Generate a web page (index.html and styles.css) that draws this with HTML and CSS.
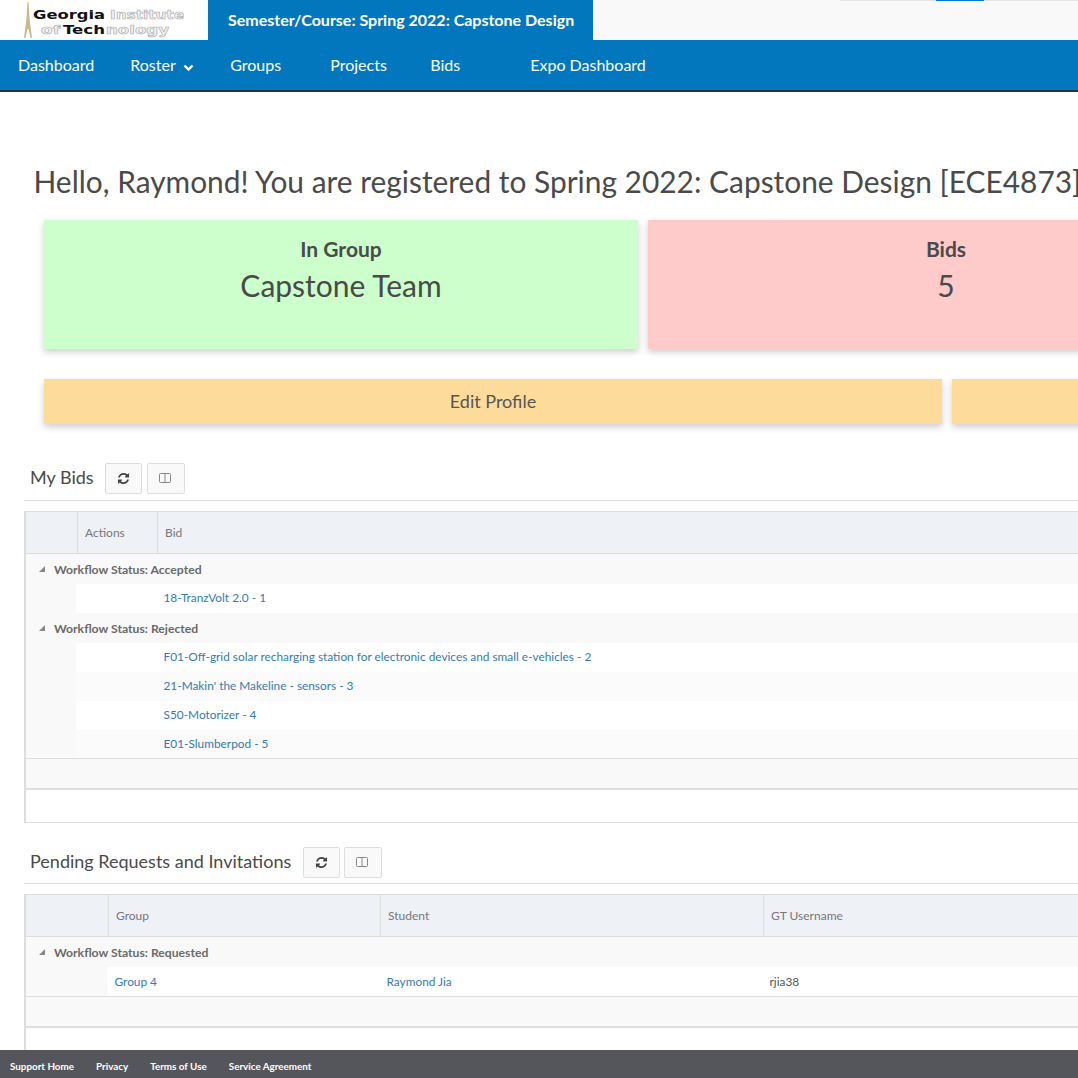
FILE: index.html
```html
<!DOCTYPE html>
<html lang="en">
<head>
	<meta charset="UTF-8">
	<title>Dashboard</title>
	<link rel="stylesheet" href="styles.css">
</head>
<body>
	<div class="top">
		<div class="logo">
			<svg width="208" height="40" viewBox="0 0 208 40">
				<path d="M27.500 2 L28.500 2 L29.500 18 L32 38 L30.500 38 L28.500 29 L27.500 29 L25.500 38 L24 38 L26.500 18 Z" fill="#c9b98a"/>
				<text class="logo-bold" x="33" y="19" textLength="72" lengthAdjust="spacingAndGlyphs">Georgia</text>
				<text class="logo-thin" x="110" y="19" textLength="74" lengthAdjust="spacingAndGlyphs">Institute</text>
				<text class="logo-thin" x="41" y="34" textLength="19" lengthAdjust="spacingAndGlyphs">of</text>
				<text class="logo-bold" x="63" y="34" textLength="42" lengthAdjust="spacingAndGlyphs">Tech</text>
				<text class="logo-thin" x="106" y="34" textLength="63" lengthAdjust="spacingAndGlyphs">nology</text>
			</svg>
		</div>
		<div class="course">Semester/Course: Spring 2022: Capstone Design</div>
		<div class="strip"><i></i></div>
	</div>
	<ul class="nav">
		<li>Dashboard</li>
		<li class="roster">Roster
			<svg class="chevron" width="11" height="8" viewBox="0 0 11 8"><path d="M1.500 1.500 L5.500 5.500 L9.500 1.500" fill="none" stroke="#fff" stroke-width="2.400"/></svg>
		</li>
		<li class="wide">Groups</li>
		<li class="wide">Projects</li>
		<li class="wide">Bids</li>
		<li>Expo Dashboard</li>
	</ul>

	<div class="page">
		<h1>Hello, Raymond! You are registered to Spring 2022: Capstone Design [ECE4873]</h1>

		<div class="cards">
			<div class="card green">
				<h3>In Group</h3>
				<p>Capstone Team</p>
			</div>
			<div class="card red">
				<h3>Bids</h3>
				<p>5</p>
			</div>
		</div>

		<div class="actions">
			<div class="action">Edit Profile</div>
			<div class="action"></div>
		</div>

		<div class="section-head">
			<h2>My Bids</h2>
			<div class="tool">
				<svg width="13" height="13" viewBox="0 0 1792 1792"><use href="#refresh"/></svg>
			</div>
			<div class="tool">
				<svg width="14" height="13" viewBox="0 0 14 13"><use href="#columns"/></svg>
			</div>
		</div>
		<div class="grid bids">
			<div class="grid-head">
				<div></div>
				<div>Actions</div>
				<div>Bid</div>
			</div>
			<div class="group"><i class="arrow"></i>Workflow Status: Accepted</div>
			<div class="row"><a>18-TranzVolt 2.0 - 1</a></div>
			<div class="group"><i class="arrow"></i>Workflow Status: Rejected</div>
			<div class="row"><a>F01-Off-grid solar recharging station for electronic devices and small e-vehicles - 2</a></div>
			<div class="row alt"><a>21-Makin' the Makeline - sensors - 3</a></div>
			<div class="row"><a>S50-Motorizer - 4</a></div>
			<div class="row alt"><a>E01-Slumberpod - 5</a></div>
			<div class="grid-foot"></div>
			<div class="grid-end"></div>
		</div>

		<div class="section-head second">
			<h2>Pending Requests and Invitations</h2>
			<div class="tool">
				<svg width="13" height="13" viewBox="0 0 1792 1792"><use href="#refresh"/></svg>
			</div>
			<div class="tool">
				<svg width="14" height="13" viewBox="0 0 14 13"><use href="#columns"/></svg>
			</div>
		</div>
		<div class="grid requests">
			<div class="grid-head">
				<div></div>
				<div>Group</div>
				<div>Student</div>
				<div>GT Username</div>
			</div>
			<div class="group"><i class="arrow"></i>Workflow Status: Requested</div>
			<div class="row">
				<a class="col-group">Group 4</a>
				<a class="col-student">Raymond Jia</a>
				<span>rjia38</span>
			</div>
			<div class="grid-foot"></div>
			<div class="grid-end"></div>
		</div>
	</div>

	<div class="footer">
		<span>Support Home</span>
		<span>Privacy</span>
		<span>Terms of Use</span>
		<span>Service Agreement</span>
	</div>

	<svg class="defs" width="0" height="0">
		<symbol id="refresh" viewBox="0 0 1792 1792">
			<path d="M1639 1056q0 5-1 7-64 268-268 434.500t-478 166.500q-146 0-282.500-55t-243.500-157l-129 129q-19 19-45 19t-45-19-19-45v-448q0-26 19-45t45-19h448q26 0 45 19t19 45-19 45l-137 137q71 66 161 102t187 36q134 0 250-65t186-179q11-17 53-117 8-23 30-23h192q13 0 22.500 9.500t9.500 22.500zm25-800v448q0 26-19 45t-45 19h-448q-26 0-45-19t-19-45 19-45l138-138q-148-137-349-137-134 0-250 65t-186 179q-11 17-53 117-8 23-30 23h-199q-13 0-22.500-9.500t-9.500-22.500v-7q65-268 270-434.500t480-166.500q146 0 284 55.500t245 156.500l130-129q19-19 45-19t45 19 19 45z" fill="#444"/>
		</symbol>
		<symbol id="columns" viewBox="0 0 14 13">
			<rect x="0.500" y="1.500" width="11" height="9" rx="1" fill="none" stroke="#888"/>
			<path d="M6 1.500 V10.500" stroke="#888"/>
		</symbol>
	</svg>
</body>
</html>
```

FILE: styles.css
```css
*{
	margin: 0;
	padding: 0;
	box-sizing: border-box;
}
ul{
	list-style: none;
}
html,body{
	height: 100%;
	overflow: hidden;
}
body{
	font-family: Lato, "Liberation Sans", sans-serif;
	color: #444;
	background: #fff;
}
.top{
	display: flex;
	height: 40px;
	background: #f9f9f9;
	position: relative;
}
.logo{
	width: 208px;
	background: #fff;
}
.logo svg{
	display: block;
}
.logo text{
	font-family: "DejaVu Sans", sans-serif;
	font-size: 12.800px;
	font-weight: bold;
}
.logo-bold{
	fill: #111;
}
.logo-thin{
	fill: #f4f4f4;
	stroke: #aaa;
	stroke-width: 0.6;
}
.course{
	width: 385px;
	background: #0277bd;
	color: #fff;
	font-size: 16px;
	font-weight: bold;
	line-height: 40px;
	padding-left: 20px;
	white-space: nowrap;
}
.strip{
	position: absolute;
	top: 0;
	left: 840px;
	right: 0;
	height: 1px;
	background: #e5e5e5;
}
.strip i{
	display: block;
	width: 48px;
	height: 1px;
	margin-left: 96px;
	background: #0277d0;
}
.nav{
	display: flex;
	height: 52px;
	background: #0277bd;
	border-bottom: 2px solid #2f3336;
	color: #fff;
	font-size: 16px;
	line-height: 50px;
}
.nav li{
	padding: 0 18px;
	white-space: nowrap;
}
.nav .wide{
	min-width: 100px;
}
.nav .roster{
	width: 100px;
	padding-right: 0;
}
.chevron{
	margin-left: 4px;
	vertical-align: -1px;
}
.page{
	width: 1300px;
	padding: 67px 0 0 24px;
}
h1{
	font-size: 29.900px;
	font-weight: normal;
	line-height: 44px;
	margin-left: 9.500px;
	white-space: nowrap;
	color: #4a4a4a;
}
.cards{
	display: flex;
	gap: 10px;
	margin: 17px 0 0 20px;
}
.card{
	width: 594px;
	height: 129px;
	padding-top: 17px;
	text-align: center;
	box-shadow: 0 3px 7px rgba(0,0,0,.2);
}
.card h3{
	font-size: 21px;
	line-height: 24px;
	color: #4b4b4b;
}
.card p{
	font-size: 30px;
	line-height: 36px;
	margin-top: 6px;
	color: #4a4a4a;
}
.green{
	background: #ccffcc;
}
.red{
	width: 596px;
	background: #ffcaca;
}
.actions{
	display: flex;
	gap: 10px;
	margin: 30px 0 0 20px;
}
.action{
	width: 898px;
	height: 45px;
	background: #fddc9b;
	text-align: center;
	font-size: 18px;
	line-height: 45px;
	box-shadow: 0 3px 7px rgba(0,0,0,.2);
	color: #555;
}
.action + .action{
	width: 300px;
}
.section-head{
	display: flex;
	align-items: flex-start;
	height: 38px;
	margin-top: 39px;
	padding: 0 0 6px 6px;
	border-bottom: 1px solid #ddd;
}
.section-head.second{
	height: 37px;
	margin-top: 24px;
	padding-bottom: 5px;
}
h2{
	font-size: 18px;
	font-weight: normal;
	line-height: 29px;
	color: #4a4a4a;
	margin-right: 11px;
}
.second h2{
	margin-right: 12px;
}
.tool{
	display: flex;
	align-items: center;
	justify-content: center;
	width: 37px;
	height: 31px;
	background: #f9f9f9;
	border: 1px solid #ddd;
	border-radius: 2px;
}
.tool + .tool{
	margin-left: 5px;
	width: 38px;
}
.second .tool + .tool{
	margin-left: 4px;
}
.grid{
	margin-top: 10px;
	border: 1px solid #ddd;
	border-left-width: 2px;
	background: #f9f9f9;
	font-size: 12px;
}
.grid-head{
	display: grid;
	height: 42px;
	background: #eef1f6;
	border-bottom: 1px solid #ddd;
	color: #777;
	line-height: 42px;
}
.bids .grid-head{
	grid-template-columns: 52px 80px 1fr;
}
.requests .grid-head{
	grid-template-columns: 83px 272px 383px 1fr;
}
.grid-head div{
	padding-left: 7px;
	border-right: 1px solid #ddd;
}
.grid-head div:last-child{
	border-right: none;
}
.group{
	height: 30px;
	padding-top: 1px;
	padding-left: 28px;
	line-height: 30px;
	font-size: 12.200px;
	font-weight: bold;
	color: #696969;
	position: relative;
}
.arrow{
	position: absolute;
	left: 13px;
	top: 12px;
	width: 0;
	height: 0;
	border-style: solid;
	border-width: 0 0 6px 6px;
	border-color: transparent transparent #888 transparent;
}
.row{
	display: flex;
	height: 29px;
	line-height: 29px;
	font-size: 11.850px;
	background: #fff;
	margin-left: 50px;
	padding-left: 87.500px;
	color: #555;
}
.bids .row{
	line-height: 27px;
}
.row.alt{
	background: #fbfbfb;
}
.row a{
	color: #337ab7;
}
.requests .row{
	margin-left: 81px;
	padding-left: 7.500px;
}
.col-group{
	width: 272px;
}
.col-student{
	width: 383px;
}
.grid-foot{
	height: 32px;
	border-top: 1px solid #ddd;
	border-bottom: 2px solid #ddd;
	background: #f9f9f9;
}
.bids .grid-foot{
	margin-top: -1px;
}
.grid-end{
	height: 32px;
	background: #fff;
}
.footer{
	position: fixed;
	left: 0;
	right: 0;
	bottom: 0;
	height: 28px;
	display: flex;
	gap: 22px;
	padding-left: 10px;
	background: #55565b;
	color: #fff;
	font-size: 9.850px;
	font-weight: bold;
	line-height: 33px;
}
.defs{
	position: absolute;
}
```
